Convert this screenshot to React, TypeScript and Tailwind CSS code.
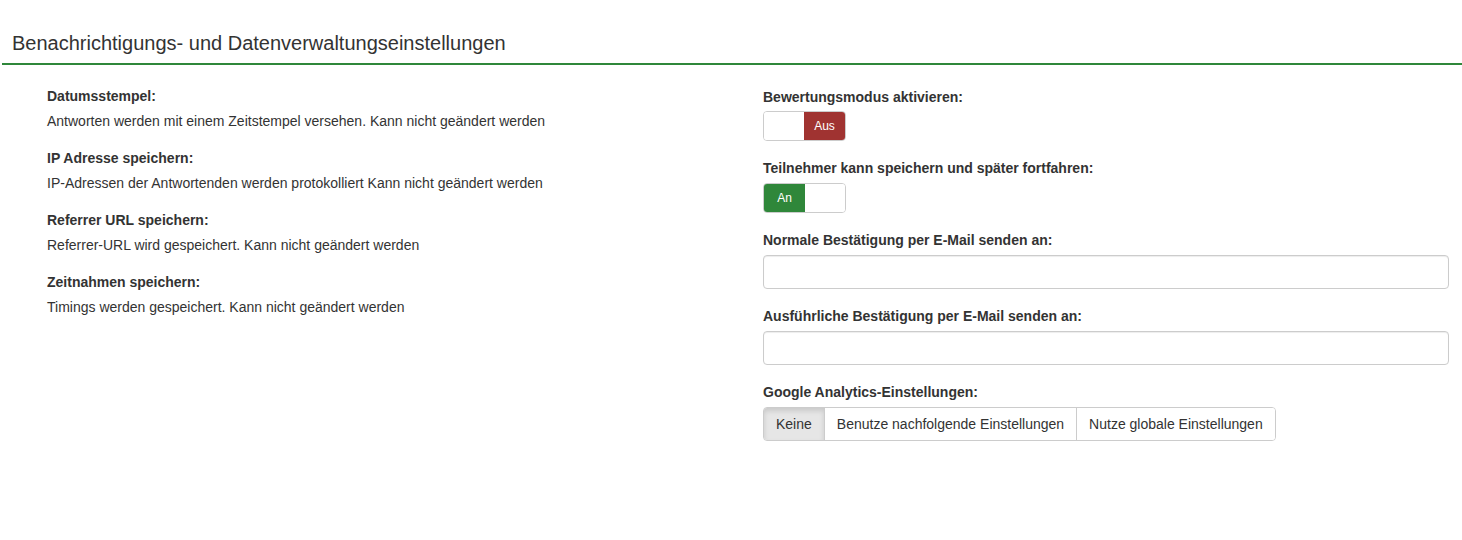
import { useState } from "react";

const leftItems = [
  { label: "Datumsstempel:", text: "Antworten werden mit einem Zeitstempel versehen. Kann nicht geändert werden" },
  { label: "IP Adresse speichern:", text: "IP-Adressen der Antwortenden werden protokolliert Kann nicht geändert werden" },
  { label: "Referrer URL speichern:", text: "Referrer-URL wird gespeichert. Kann nicht geändert werden" },
  { label: "Zeitnahmen speichern:", text: "Timings werden gespeichert. Kann nicht geändert werden" },
];

function Toggle({ on }: { on: boolean }) {
  return (
    <div className="flex h-[30px] w-[83px] overflow-hidden rounded-[4px] border border-[#ccc] text-[12px] text-white">
      {on ? (
        <>
          <span className="flex w-[41px] items-center justify-center bg-[#2f873a]">An</span>
          <span className="flex-1 bg-white"></span>
        </>
      ) : (
        <>
          <span className="flex-1 bg-white"></span>
          <span className="flex w-[41px] items-center justify-center bg-[#a03331]">Aus</span>
        </>
      )}
    </div>
  );
}

export default function App() {
  const [analytics, setAnalytics] = useState("Keine");
  const options = ["Keine", "Benutze nachfolgende Einstellungen", "Nutze globale Einstellungen"];

  return (
    <div className="min-h-[540px] bg-white text-[14px] text-[#333] font-['Liberation_Sans',Arial,sans-serif]">
      <div className="pl-[12px] pt-[30px] pb-[7px] text-[20px] leading-[26px] text-[#333]">
        Benachrichtigungs- und Datenverwaltungseinstellungen
      </div>
      <div className="ml-[2px] h-[2px] bg-[#2f873a]"></div>

      <div className="flex pt-[22px]">
        <div className="ml-[47px] w-[686px] -mt-[1px]">
          {leftItems.map((item) => (
            <div key={item.label} className="mb-[17px]">
              <div className="text-[14px] font-bold leading-[20px]">{item.label}</div>
              <div className="mt-[5px] leading-[20px]">{item.text}</div>
            </div>
          ))}
        </div>

        <div className="ml-[30px] w-[686px]">
          <div className="font-bold leading-[20px]">Bewertungsmodus aktivieren:</div>
          <div className="mt-[4px]">
            <Toggle on={false} />
          </div>

          <div className="mt-[17px] font-bold leading-[20px]">Teilnehmer kann speichern und später fortfahren:</div>
          <div className="mt-[5px]">
            <Toggle on={true} />
          </div>

          <div className="mt-[17px] font-bold leading-[20px]">Normale Bestätigung per E-Mail senden an:</div>
          <input
            type="text"
            className="mt-[5px] block h-[34px] w-full rounded-[4px] border border-[#ccc] px-3 shadow-[inset_0_1px_1px_rgba(0,0,0,0.075)] outline-none"
          />

          <div className="mt-[17px] font-bold leading-[20px]">Ausführliche Bestätigung per E-Mail senden an:</div>
          <input
            type="text"
            className="mt-[5px] block h-[34px] w-full rounded-[4px] border border-[#ccc] px-3 shadow-[inset_0_1px_1px_rgba(0,0,0,0.075)] outline-none"
          />

          <div className="mt-[17px] font-bold leading-[20px]">Google Analytics-Einstellungen:</div>
          <div className="mt-[5px] inline-flex h-[34px] rounded-[4px] border border-[#ccc]">
            {options.map((o, i) => (
              <button
                key={o}
                onClick={() => setAnalytics(o)}
                className={`px-[12px] leading-[20px] ${i > 0 ? "border-l border-[#ccc]" : ""} ${
                  analytics === o
                    ? "bg-[#e6e6e6] shadow-[inset_0_3px_5px_rgba(0,0,0,0.125)]"
                    : "bg-white"
                } ${i === 0 ? "rounded-l-[3px]" : ""} ${i === options.length - 1 ? "rounded-r-[3px]" : ""}`}
              >
                {o}
              </button>
            ))}
          </div>
        </div>
      </div>
    </div>
  );
}
